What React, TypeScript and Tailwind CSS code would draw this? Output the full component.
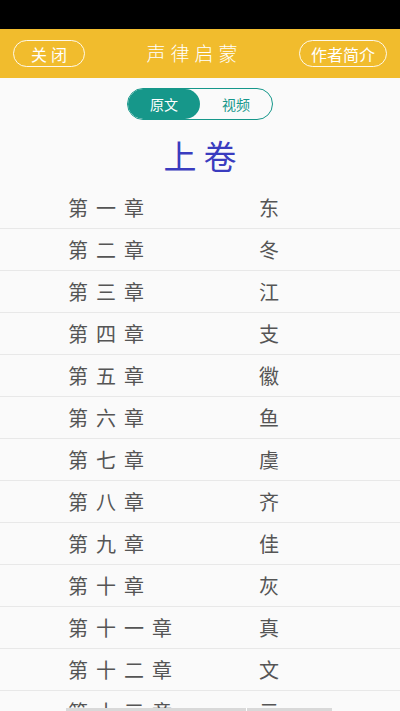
import React, { useState } from 'react';

const chapters = [
  ['第一章', '东'],
  ['第二章', '冬'],
  ['第三章', '江'],
  ['第四章', '支'],
  ['第五章', '徽'],
  ['第六章', '鱼'],
  ['第七章', '虞'],
  ['第八章', '齐'],
  ['第九章', '佳'],
  ['第十章', '灰'],
  ['第十一章', '真'],
  ['第十二章', '文'],
  ['第十三章', '元'],
];

const cjk = { fontFamily: '"Noto Sans CJK SC", "Noto Sans", sans-serif' };

export default function App() {
  const [tab, setTab] = useState<'text' | 'video'>('text');

  return (
    <div className="h-[711px] overflow-hidden bg-[#fafafa] relative" style={cjk}>
      <div className="h-[29px] bg-black" />

      <header className="h-[49px] bg-[#f1bc2d] flex items-center justify-between px-[13px]">
        <button className="w-[72px] h-[27px] rounded-full border border-white/90 text-white text-[16px] tracking-[4px] pl-[4px] flex items-center justify-center">
          关闭
        </button>
        <h1 className="text-white text-[19px] tracking-[5px] pl-[5px] font-light">声律启蒙</h1>
        <button className="w-[88px] h-[27px] rounded-full border border-white/90 text-white text-[16px] flex items-center justify-center">
          作者简介
        </button>
      </header>

      <div className="flex justify-center pt-[10px]">
        <div className="w-[146px] h-[32px] rounded-full border border-[#16978a] flex overflow-hidden">
          <button
            onClick={() => setTab('text')}
            className={`flex-1 rounded-full text-[14px] ${tab === 'text' ? 'bg-[#16978a] text-white' : 'text-[#16978a]'}`}
          >
            原文
          </button>
          <button
            onClick={() => setTab('video')}
            className={`flex-1 rounded-full text-[14px] ${tab === 'video' ? 'bg-[#16978a] text-white' : 'text-[#16978a]'}`}
          >
            视频
          </button>
        </div>
      </div>

      <div className="h-[67px] pt-1 flex items-center justify-center">
        <h2 className="text-[#3a3cbf] text-[33px] tracking-[7px] pl-[7px]">上卷</h2>
      </div>

      <ul>
        {chapters.map(([name, rhyme]) => (
          <li
            key={name}
            className="h-[42px] border-b border-[#e8e8e8] flex items-center pl-[68px] text-[#555555] text-[20px]"
          >
            <span className="w-[191px] tracking-[8px]">{name}</span>
            <span>{rhyme}</span>
          </li>
        ))}
      </ul>

      <div className="absolute bottom-0 left-[66px] w-[266px] h-[3px] bg-[#d9d9d9] flex">
        <div className="w-[180px]" />
        <div className="w-px bg-white" />
      </div>
    </div>
  );
}
